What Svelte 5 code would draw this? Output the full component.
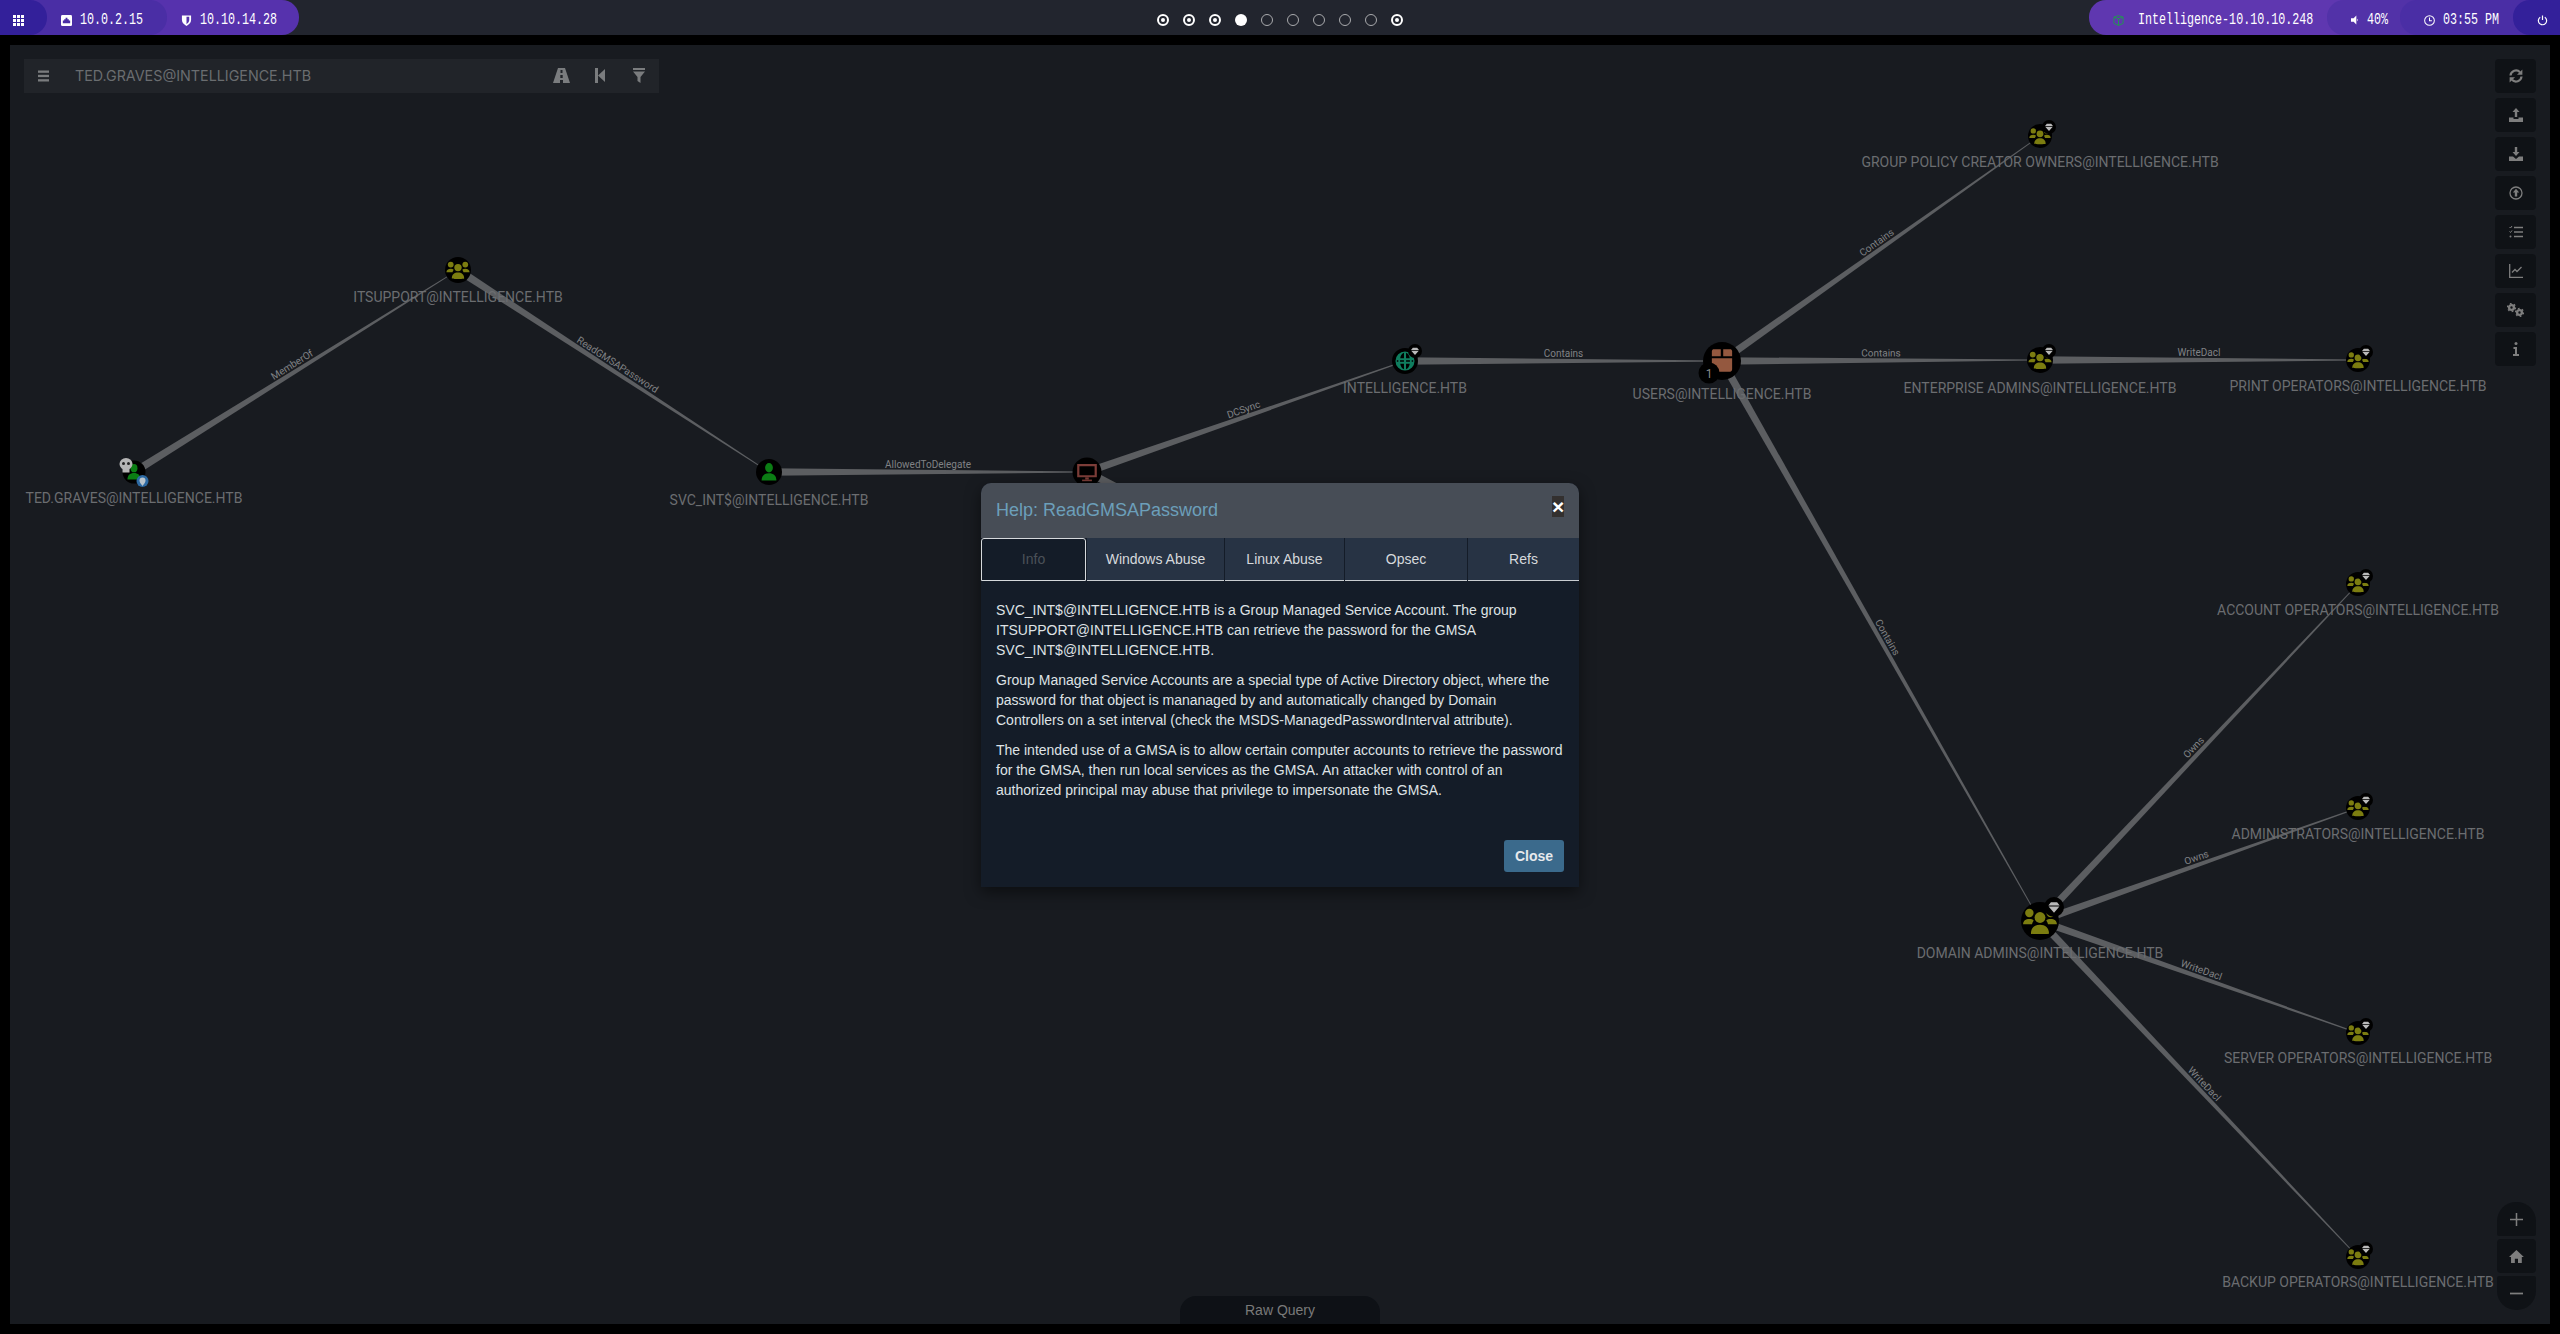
<script>
  const nodes = {
    ted: { x: 134, y: 472, r: 11.5, kind: 'user', color: '#0b7d14', label: 'TED.GRAVES@INTELLIGENCE.HTB', ly: 503 },
    its: { x: 458, y: 270, r: 13, kind: 'group', color: '#7c7d10', label: 'ITSUPPORT@INTELLIGENCE.HTB', ly: 302 },
    svc: { x: 769, y: 472, r: 13, kind: 'user', color: '#0b7d14', label: 'SVC_INT$@INTELLIGENCE.HTB', ly: 505 },
    pc: { x: 1087, y: 472, r: 14.5, kind: 'computer', color: '#7c3d38' },
    dom: { x: 1405, y: 361, r: 13, kind: 'domain', color: '#0f7d5e', label: 'INTELLIGENCE.HTB', ly: 393 },
    users: { x: 1722, y: 361, r: 19, kind: 'ou', color: '#94583f', label: 'USERS@INTELLIGENCE.HTB', ly: 399 },
    ent: { x: 2040, y: 360, r: 13, kind: 'group', color: '#7c7d10', label: 'ENTERPRISE ADMINS@INTELLIGENCE.HTB', ly: 393 },
    print: { x: 2358, y: 360, r: 12, kind: 'group', color: '#7c7d10', label: 'PRINT OPERATORS@INTELLIGENCE.HTB', ly: 391 },
    gpo: { x: 2040, y: 136, r: 12, kind: 'group', color: '#7c7d10', label: 'GROUP POLICY CREATOR OWNERS@INTELLIGENCE.HTB', ly: 167 },
    da: { x: 2040, y: 921, r: 19, kind: 'group', color: '#7c7d10', label: 'DOMAIN ADMINS@INTELLIGENCE.HTB', ly: 958 },
    acc: { x: 2358, y: 584, r: 12, kind: 'group', color: '#7c7d10', label: 'ACCOUNT OPERATORS@INTELLIGENCE.HTB', ly: 615 },
    adm: { x: 2358, y: 808, r: 12, kind: 'group', color: '#7c7d10', label: 'ADMINISTRATORS@INTELLIGENCE.HTB', ly: 839 },
    srv: { x: 2358, y: 1033, r: 12, kind: 'group', color: '#7c7d10', label: 'SERVER OPERATORS@INTELLIGENCE.HTB', ly: 1063 },
    bak: { x: 2358, y: 1257, r: 12, kind: 'group', color: '#7c7d10', label: 'BACKUP OPERATORS@INTELLIGENCE.HTB', ly: 1287 },
    hidden: { x: 1320, y: 590, r: 0 }
  };

  const iconScale = { group: 0.92, user: 0.72, computer: 0.74, domain: 0.8, ou: 0.64 };

  const links = [
    ['ted', 'its', 'MemberOf'],
    ['its', 'svc', 'ReadGMSAPassword'],
    ['svc', 'pc', 'AllowedToDelegate'],
    ['pc', 'dom', 'DCSync'],
    ['pc', 'hidden', ''],
    ['dom', 'users', 'Contains'],
    ['users', 'ent', 'Contains'],
    ['users', 'gpo', 'Contains'],
    ['users', 'da', 'Contains'],
    ['ent', 'print', 'WriteDacl'],
    ['da', 'acc', 'Owns'],
    ['da', 'adm', 'Owns'],
    ['da', 'srv', 'WriteDacl'],
    ['da', 'bak', 'WriteDacl']
  ];

  // tapered edge, thick at the source and a hairline at the target
  function edge(a, b) {
    const dx = b.x - a.x;
    const dy = b.y - a.y;
    const len = Math.hypot(dx, dy);
    const nx = -dy / len;
    const ny = dx / len;
    const w0 = 3.8;
    const w1 = 0.4;
    const points = [
      [a.x + nx * w0, a.y + ny * w0],
      [b.x + nx * w1, b.y + ny * w1],
      [b.x - nx * w1, b.y - ny * w1],
      [a.x - nx * w0, a.y - ny * w0]
    ].map((p) => p.map((v) => v.toFixed(1)).join(',')).join(' ');
    return {
      points,
      mx: (a.x + b.x) / 2,
      my: (a.y + b.y) / 2,
      angle: (Math.atan2(dy, dx) * 180) / Math.PI
    };
  }

  const edges = links.map(([s, t, label]) => ({ ...edge(nodes[s], nodes[t]), label }));
  const nodeList = Object.values(nodes).filter((n) => n.kind);

  const diamonds = [
    { x: 1415, y: 351, r: 7 },
    { x: 2049, y: 351, r: 7 },
    { x: 2366, y: 352, r: 7 },
    { x: 2049, y: 127, r: 7 },
    { x: 2366, y: 576, r: 7 },
    { x: 2366, y: 800, r: 7 },
    { x: 2366, y: 1025, r: 7 },
    { x: 2366, y: 1249, r: 7 },
    { x: 2054, y: 907, r: 10 }
  ];

  const dots = ['on', 'on', 'on', 'full', 'off', 'off', 'off', 'off', 'off', 'on'];
  const tabs = ['Info', 'Windows Abuse', 'Linux Abuse', 'Opsec', 'Refs'];
</script>

<div class="screen">
  <header class="bar">
    <div class="pills left">
      <div class="pill">
        <svg class="ico" viewBox="0 0 11 11" fill="#fff">
          <rect width="3" height="3" /><rect x="4" width="3" height="3" /><rect x="8" width="3" height="3" />
          <rect y="4" width="3" height="3" /><rect x="4" y="4" width="3" height="3" /><rect x="8" y="4" width="3" height="3" />
          <rect y="8" width="3" height="3" /><rect x="4" y="8" width="3" height="3" /><rect x="8" y="8" width="3" height="3" />
        </svg>
      </div>
      <div class="pill">
        <svg class="ico" viewBox="0 0 12 12"><rect width="12" height="12" rx="1.5" fill="#fff" /><path d="M2 9V6h1.500V4.500H5V3h2v1.500h1.500V6H10v3z" fill="#4a2ea5" /></svg>
        <span class="mono" style:width="63px">10.0.2.15</span>
      </div>
      <div class="pill">
        <svg class="ico" viewBox="0 0 10 12"><path d="M0 0.500h10v5c0 3-2.500 5-5 6.500-2.500-1.500-5-3.500-5-6.500z" fill="#fff" /><path d="M5 2h3v3.500c0 2-1.500 3.500-3 4.500z" fill="#5632ad" /></svg>
        <span class="mono" style:width="77px">10.10.14.28</span>
      </div>
    </div>

    <div class="dots">
      {#each dots as d}
        <span class="dot {d}"></span>
      {/each}
    </div>

    <div class="pills right">
      <div class="pill">
        <svg class="ico" viewBox="0 0 12 12" fill="none" stroke="#1f9d4d" stroke-width="1"><path d="M6 .6l5 1.800v6.800L6 11.400 1 9.200V2.400zM1 2.400l5 1.800 5-1.800M6 4.200v7.200" /></svg>
        <span class="mono" style:width="175px">Intelligence-10.10.10.248</span>
      </div>
      <div class="pill">
        <svg class="ico small" viewBox="0 0 9 10" fill="#fff"><path d="M0 3h3l3-3v10L3 7H0z" /><path d="M7 3.500c1 .8 1 2.200 0 3z" /></svg>
        <span class="mono" style:width="21px">40%</span>
      </div>
      <div class="pill">
        <svg class="ico" viewBox="0 0 12 12" fill="none" stroke="#fff" stroke-width="1.100"><circle cx="6" cy="6" r="5.300" /><path d="M6 2.800V6.300h2.600" /></svg>
        <span class="mono" style:width="56px">03:55 PM</span>
      </div>
      <div class="pill">
        <svg class="ico" viewBox="0 0 12 12" fill="none" stroke="#fff" stroke-width="1.300"><path d="M3.500 2.400a4.500 4.500 0 1 0 5 0M6 .5v5" /></svg>
      </div>
    </div>
  </header>

  <main class="graph">
    <svg class="canvas" viewBox="10 45 2540 1279">
      <defs>
        <symbol id="group" viewBox="0 0 24 24">
          <circle cx="12" cy="9.600" r="3.700" />
          <path d="M5.800 20.500c0-4 2.600-6 6.200-6s6.200 2 6.200 6c0 .6-12.400.6-12.400 0z" />
          <circle cx="4.700" cy="6.500" r="2.900" />
          <circle cx="19.300" cy="6.500" r="2.900" />
          <path d="M.4 14.300c0-2.400 1.800-3.600 4.300-3.600 1.300 0 2.300.3 3 1-.6.800-1 1.700-1.200 2.600z" />
          <path d="M23.600 14.300c0-2.400-1.800-3.600-4.300-3.600-1.300 0-2.300.3-3 1 .6.800 1 1.700 1.200 2.600z" />
        </symbol>
        <symbol id="user" viewBox="0 0 24 24">
          <ellipse cx="12" cy="6.500" rx="5" ry="6" />
          <path d="M2.500 23c0-6.500 4-9.500 9.500-9.500s9.500 3 9.500 9.500z" />
        </symbol>
        <symbol id="computer" viewBox="0 0 24 24">
          <path fill-rule="evenodd" d="M1 3h22v15H1zM3.500 5.500v10h17v-10z" />
          <rect x="10" y="18" width="4" height="2.500" />
          <rect x="6.500" y="20.500" width="11" height="1.800" />
        </symbol>
        <symbol id="domain" viewBox="0 0 24 24">
          <path fill-rule="evenodd" d="M12 1a11 11 0 1 0 0 22 11 11 0 0 0 0-22zM10.800 2.500v6.200H6.500c.4-3 2-5.500 4.300-6.200zM13.200 2.500c2.300.7 3.900 3.200 4.300 6.200h-4.300zM2.600 11h1.700v2H2.600zM6.300 11h4.500v2H6.300zM13.200 11h4.500v2h-4.500zM19.700 11h1.700v2h-1.700zM6.500 15.300h4.300v6.200c-2.300-.7-3.900-3.200-4.300-6.200zM13.200 15.300h4.300c-.4 3-2 5.500-4.300 6.200z" />
        </symbol>
        <symbol id="ou" viewBox="0 0 24 24">
          <path d="M2 2.500C2 1 3 .4 4 .4h6.800v6.800H2zM13.200.4H20c1 0 2 .6 2 2.100v4.700h-8.800zM2 9.200h20v11c0 1.600-1 2.400-2 2.400H4c-1 0-2-.8-2-2.400z" />
        </symbol>
        <symbol id="diamond" viewBox="0 0 24 24">
          <path d="M6 3h12l5 6H1zM1.500 11h21L12 23z" />
        </symbol>
      </defs>

      {#each edges as e}
        <polygon points={e.points} fill="#5c5e61" />
        {#if e.label}
          <text class="edge-label" transform="translate({e.mx} {e.my}) rotate({e.angle})" y="-4">{e.label}</text>
        {/if}
      {/each}

      {#each nodeList as n}
        {@const s = n.r * iconScale[n.kind]}
        <circle cx={n.x} cy={n.y} r={n.r} fill="#000" />
        <use href="#{n.kind}" x={n.x - s} y={n.y - s} width={s * 2} height={s * 2} fill={n.color} />
        {#if n.label}
          <text class="node-label" x={n.x} y={n.ly}>{n.label}</text>
        {/if}
      {/each}

      {#each diamonds as d}
        <circle cx={d.x} cy={d.y} r={d.r} fill="#000" />
        <use href="#diamond" x={d.x - d.r * 0.62} y={d.y - d.r * 0.62} width={d.r * 1.24} height={d.r * 1.24} fill="#b9b9b9" />
      {/each}

      <!-- owned skull and pin on the start node, count on the OU -->
      <g fill="#b5b5b5">
        <ellipse cx="126" cy="464" rx="6.500" ry="6" />
        <rect x="122.500" y="468" width="7" height="4.500" />
      </g>
      <circle cx="123.500" cy="463.500" r="1.500" fill="#222" />
      <circle cx="128.500" cy="463.500" r="1.500" fill="#222" />
      <circle cx="142.500" cy="481" r="6" fill="#2d6aa3" />
      <path d="M142.500 486c-2-2.500-3-4-3-5.500a3 3 0 0 1 6 0c0 1.500-1 3-3 5.500z" fill="#b9c4cc" />
      <circle cx="1709" cy="373" r="10.500" fill="#000" />
      <text class="count" x="1709" y="377.500">1</text>
    </svg>

    <div class="search">
      <svg class="menu" viewBox="0 0 12 12" fill="#7a7c7e"><rect width="12" height="2.500" /><rect y="4.700" width="12" height="2.500" /><rect y="9.500" width="12" height="2.500" /></svg>
      <span class="query">TED.GRAVES@INTELLIGENCE.HTB</span>
      <div class="search-icons">
        <svg viewBox="0 0 17 15" fill="#7a7c7e"><path fill-rule="evenodd" d="M5 0h7l5 15H0zM7.500 2v3h2V2zM7.300 7v3h2.400V7zM7 12v3h3v-3z" /></svg>
        <svg viewBox="0 0 10 15" fill="#7a7c7e"><rect width="3" height="15" /><path d="M3 7.500L10 1v13z" /></svg>
        <svg viewBox="0 0 12 15" fill="#7a7c7e"><rect width="12" height="2" /><path d="M0 3.500h12L7.500 9v6l-3-2V9z" /></svg>
      </div>
    </div>

    <div class="tools">
      <button aria-label="Refresh">
        <svg viewBox="0 0 14 14" fill="none" stroke="#7e7e7e" stroke-width="2.200"><path d="M1.500 6.500A5.500 5.500 0 0 1 11 3.200M12.500 7.500A5.500 5.500 0 0 1 3 10.800" /><path d="M13.400 .4v5.400H8z" fill="#7e7e7e" stroke="none" /><path d="M.6 13.600V8.200H6z" fill="#7e7e7e" stroke="none" /></svg>
      </button>
      <button aria-label="Upload">
        <svg viewBox="0 0 14 14" fill="#7e7e7e"><path d="M7 0l3.500 4H8.200v5H5.800V4H3.500zM0 9.500h4.500V11h5V9.500H14V14H0z" /></svg>
      </button>
      <button aria-label="Download">
        <svg viewBox="0 0 14 14" fill="#7e7e7e"><path d="M5.800 0h2.400v5h2.300L7 9 3.500 5h2.300zM0 9.500h4L7 12l3-2.500h4V14H0z" /></svg>
      </button>
      <button aria-label="Import">
        <svg viewBox="0 0 14 14"><circle cx="7" cy="7" r="6" fill="none" stroke="#7e7e7e" stroke-width="1.300" /><path d="M7 2.800l3.200 3.600H8.200v4.200H5.800V6.400H3.800z" fill="#7e7e7e" /></svg>
      </button>
      <button aria-label="Tasks">
        <svg viewBox="0 0 14 14" fill="none" stroke="#7e7e7e" stroke-width="1.300"><path d="M5 2.500h9M5 7h9M5 11.500h9" /><path d="M.5 2l1 1 1.500-2M.5 6.500l1 1 1.500-2" stroke-width="1" /><circle cx="1.500" cy="11.500" r="1" fill="#7e7e7e" stroke="none" /></svg>
      </button>
      <button aria-label="Chart">
        <svg viewBox="0 0 14 14" fill="none" stroke="#7e7e7e" stroke-width="1.300"><path d="M.7 0v13.300H14" /><path d="M3 8.500l3-3 2 2 4.500-4.500" /></svg>
      </button>
      <button aria-label="Settings">
        <svg viewBox="0 0 17 14" fill="none" stroke="#7e7e7e">
          <circle cx="4.500" cy="4.500" r="2.400" stroke-width="2.400" />
          <circle cx="4.500" cy="4.500" r="3.900" stroke-width="1.500" stroke-dasharray="1.700 2.380" />
          <circle cx="12.500" cy="9.500" r="2.400" stroke-width="2.400" />
          <circle cx="12.500" cy="9.500" r="3.900" stroke-width="1.500" stroke-dasharray="1.700 2.380" />
        </svg>
      </button>
      <button aria-label="Info">
        <svg viewBox="0 0 6 14" fill="#7e7e7e"><circle cx="3" cy="1.500" r="1.500" /><path d="M.5 5H4v7h2v2H0v-2h2V7H.5z" /></svg>
      </button>
    </div>

    <div class="zoom">
      <button class="first" aria-label="Zoom in">
        <svg viewBox="0 0 12 12" fill="#7e7e7e"><path d="M5.300 0h1.400v5.300H12v1.400H6.700V12H5.300V6.700H0V5.300h5.300z" /></svg>
      </button>
      <button aria-label="Home">
        <svg viewBox="0 0 16 14" fill="#7e7e7e"><path d="M8 0l8 7.500h-2.200V14H9.700V9.500H6.300V14H2.200V7.500H0z" /></svg>
      </button>
      <button class="last" aria-label="Zoom out">
        <svg viewBox="0 0 12 12" fill="#7e7e7e"><rect y="5.200" width="12" height="1.600" /></svg>
      </button>
    </div>

    <div class="raw">Raw Query</div>

    <section class="modal">
      <div class="modal-head">
        <h4>Help: ReadGMSAPassword</h4>
        <span class="x">×</span>
      </div>
      <div class="tabs">
        {#each tabs as t, i}
          <div class="tab" class:active={i === 0}>{t}</div>
        {/each}
      </div>
      <div class="modal-body">
        <p>SVC_INT$@INTELLIGENCE.HTB is a Group Managed Service Account. The group ITSUPPORT@INTELLIGENCE.HTB can retrieve the password for the GMSA SVC_INT$@INTELLIGENCE.HTB.</p>
        <p>Group Managed Service Accounts are a special type of Active Directory object, where the password for that object is mananaged by and automatically changed by Domain Controllers on a set interval (check the MSDS-ManagedPasswordInterval attribute).</p>
        <p>The intended use of a GMSA is to allow certain computer accounts to retrieve the password for the GMSA, then run local services as the GMSA. An attacker with control of an authorized principal may abuse that privilege to impersonate the GMSA.</p>
      </div>
      <div class="modal-foot">
        <button class="close">Close</button>
      </div>
    </section>
  </main>
</div>

<style>
  :global(body) {
    margin: 0;
    background: #000;
  }

  .screen {
    height: 1334px;
    display: flex;
    flex-direction: column;
    overflow: hidden;
  }

  .bar {
    height: 35px;
    flex: none;
    background: #22252e;
    display: grid;
    grid-template-columns: 1fr auto 1fr;
    align-items: center;
  }

  .pills {
    display: flex;
    height: 35px;
  }

  .pills.right {
    justify-content: flex-end;
  }

  .pill {
    position: relative;
    display: flex;
    align-items: center;
    gap: 8px;
    height: 35px;
    box-sizing: border-box;
    margin-left: -17px;
    padding-top: 5px;
  }

  .left .pill {
    border-radius: 0 17px 17px 0;
    padding-left: 31px;
  }

  .left .pill:nth-child(1) {
    margin-left: 0;
    width: 47px;
    padding-left: 13px;
    background: #33209a;
    z-index: 3;
  }

  .left .pill:nth-child(2) {
    width: 137px;
    background: #4a2ea5;
    z-index: 2;
  }

  .left .pill:nth-child(3) {
    width: 149px;
    background: #5632ad;
  }

  .right .pill {
    border-radius: 17px 0 0 17px;
    padding-left: 24px;
  }

  .right .pill:nth-child(1) {
    width: 255px;
    background: #5f37b0;
    gap: 14px;
  }

  .right .pill:nth-child(2) {
    width: 90px;
    background: #5232a8;
  }

  .right .pill:nth-child(3) {
    width: 130px;
    background: #4a2ea5;
  }

  .right .pill:nth-child(4) {
    width: 47px;
    background: #33209a;
  }

  .ico {
    width: 11px;
    height: 11px;
    flex: none;
  }

  .ico.small {
    width: 8px;
    height: 10px;
  }

  .mono {
    display: inline-block;
    font: 16px "Liberation Mono", monospace;
    color: #fff;
    white-space: nowrap;
    transform: scaleX(0.73);
    transform-origin: left center;
  }

  .dots {
    display: flex;
    gap: 14px;
    padding-top: 5px;
  }

  .dot {
    width: 12px;
    height: 12px;
    box-sizing: border-box;
    border-radius: 50%;
    position: relative;
  }

  .dot.on {
    border: 2px solid #fff;
  }

  .dot.on::after {
    content: "";
    position: absolute;
    inset: 2px;
    border-radius: 50%;
    background: #fff;
  }

  .dot.full {
    background: #fff;
  }

  .dot.off {
    border: 1px solid #a9aaad;
  }

  .graph {
    position: relative;
    flex: 1;
    margin: 10px;
    background: #181b20;
    overflow: hidden;
  }

  .canvas {
    position: absolute;
    inset: 0;
    width: 100%;
    height: 100%;
  }

  .node-label {
    font: 14px Roboto, sans-serif;
    fill: #6b6d70;
    text-anchor: middle;
  }

  .edge-label {
    font: 10px Roboto, sans-serif;
    fill: #808285;
    text-anchor: middle;
  }

  .count {
    font: 12px Roboto, sans-serif;
    fill: #8a8a8a;
    text-anchor: middle;
  }

  .search {
    position: absolute;
    left: 14px;
    top: 14px;
    width: 635px;
    height: 34px;
    background: #212429;
    display: flex;
    align-items: center;
    padding: 0 14px 1px;
    box-sizing: border-box;
  }

  .menu {
    width: 11px;
    height: 12px;
    flex: none;
  }

  .query {
    margin-left: 26px;
    flex: 1;
    font: 14.3px Inter, sans-serif;
    color: #6a6d70;
  }

  .search-icons {
    display: flex;
    align-items: center;
    gap: 25px;
  }

  .search-icons svg {
    height: 15px;
    width: auto;
  }

  .search-icons svg:last-child {
    margin-left: 3px;
  }

  .tools {
    position: absolute;
    right: 14px;
    top: 14px;
    display: flex;
    flex-direction: column;
    gap: 5px;
  }

  .tools button,
  .zoom button {
    width: 41px;
    height: 34px;
    border: 0;
    padding: 0;
    background: #0f1216;
    border-radius: 4px;
    display: flex;
    align-items: center;
    justify-content: center;
  }

  .tools svg {
    height: 14px;
    width: auto;
  }

  .zoom {
    position: absolute;
    right: 14px;
    top: 1157px;
    display: flex;
    flex-direction: column;
    gap: 3px;
  }

  .zoom button {
    width: 39px;
  }

  .zoom svg {
    height: 13px;
    width: auto;
  }

  .zoom .first {
    border-radius: 19px 19px 2px 2px;
  }

  .zoom .last {
    border-radius: 2px 2px 19px 19px;
  }

  .raw {
    position: absolute;
    left: 1170px;
    bottom: 0;
    width: 200px;
    height: 28px;
    background: #0e1116;
    border-radius: 16px 16px 0 0;
    color: #7a7a7a;
    font: 14px/28px "Liberation Sans", sans-serif;
    text-align: center;
  }

  .modal {
    position: absolute;
    left: 971px;
    top: 438px;
    width: 598px;
    height: 404px;
    display: flex;
    flex-direction: column;
    background: #141c28;
    border-radius: 10px 10px 0 0;
    box-shadow: 0 5px 15px rgba(0, 0, 0, 0.5);
    font-family: "Liberation Sans", sans-serif;
  }

  .modal-head {
    position: relative;
    height: 55px;
    flex: none;
    background: #474d56;
    border-radius: 10px 10px 0 0;
    display: flex;
    align-items: center;
    padding: 0 15px;
  }

  h4 {
    margin: 0;
    font-size: 18px;
    font-weight: 400;
    color: #6c9fba;
  }

  .x {
    position: absolute;
    left: 571px;
    top: 13px;
    width: 12px;
    height: 21px;
    background: #33302f;
    color: #fff;
    font: bold 21px/21px "Liberation Sans", sans-serif;
    text-align: center;
  }

  .tabs {
    height: 41px;
    flex: none;
    display: grid;
    grid-template-columns: 105px 137px 119px 122px 111px;
    column-gap: 1px;
  }

  .tab {
    background: #273344;
    border-bottom: 1px solid #c9cdd1;
    color: #d6d9dc;
    font-size: 14px;
    line-height: 42px;
    text-align: center;
  }

  .tab.active {
    background: #141c28;
    border: 1px solid #d6d9dc;
    border-radius: 3px 3px 0 0;
    color: #4b5158;
    line-height: 40px;
  }

  .modal-body {
    flex: 1;
    padding: 21px 15px 0;
    color: #dfe2e5;
    font-size: 14px;
    line-height: 20px;
  }

  p {
    margin: 0 0 10px;
  }

  .modal-foot {
    flex: none;
    display: flex;
    justify-content: flex-end;
    padding: 0 15px 15px;
  }

  .close {
    width: 60px;
    height: 32px;
    padding: 0;
    border: 0;
    border-radius: 3px;
    background: #3b6a8c;
    color: #e6e9ec;
    font: bold 14px "Liberation Sans", sans-serif;
  }
</style>
